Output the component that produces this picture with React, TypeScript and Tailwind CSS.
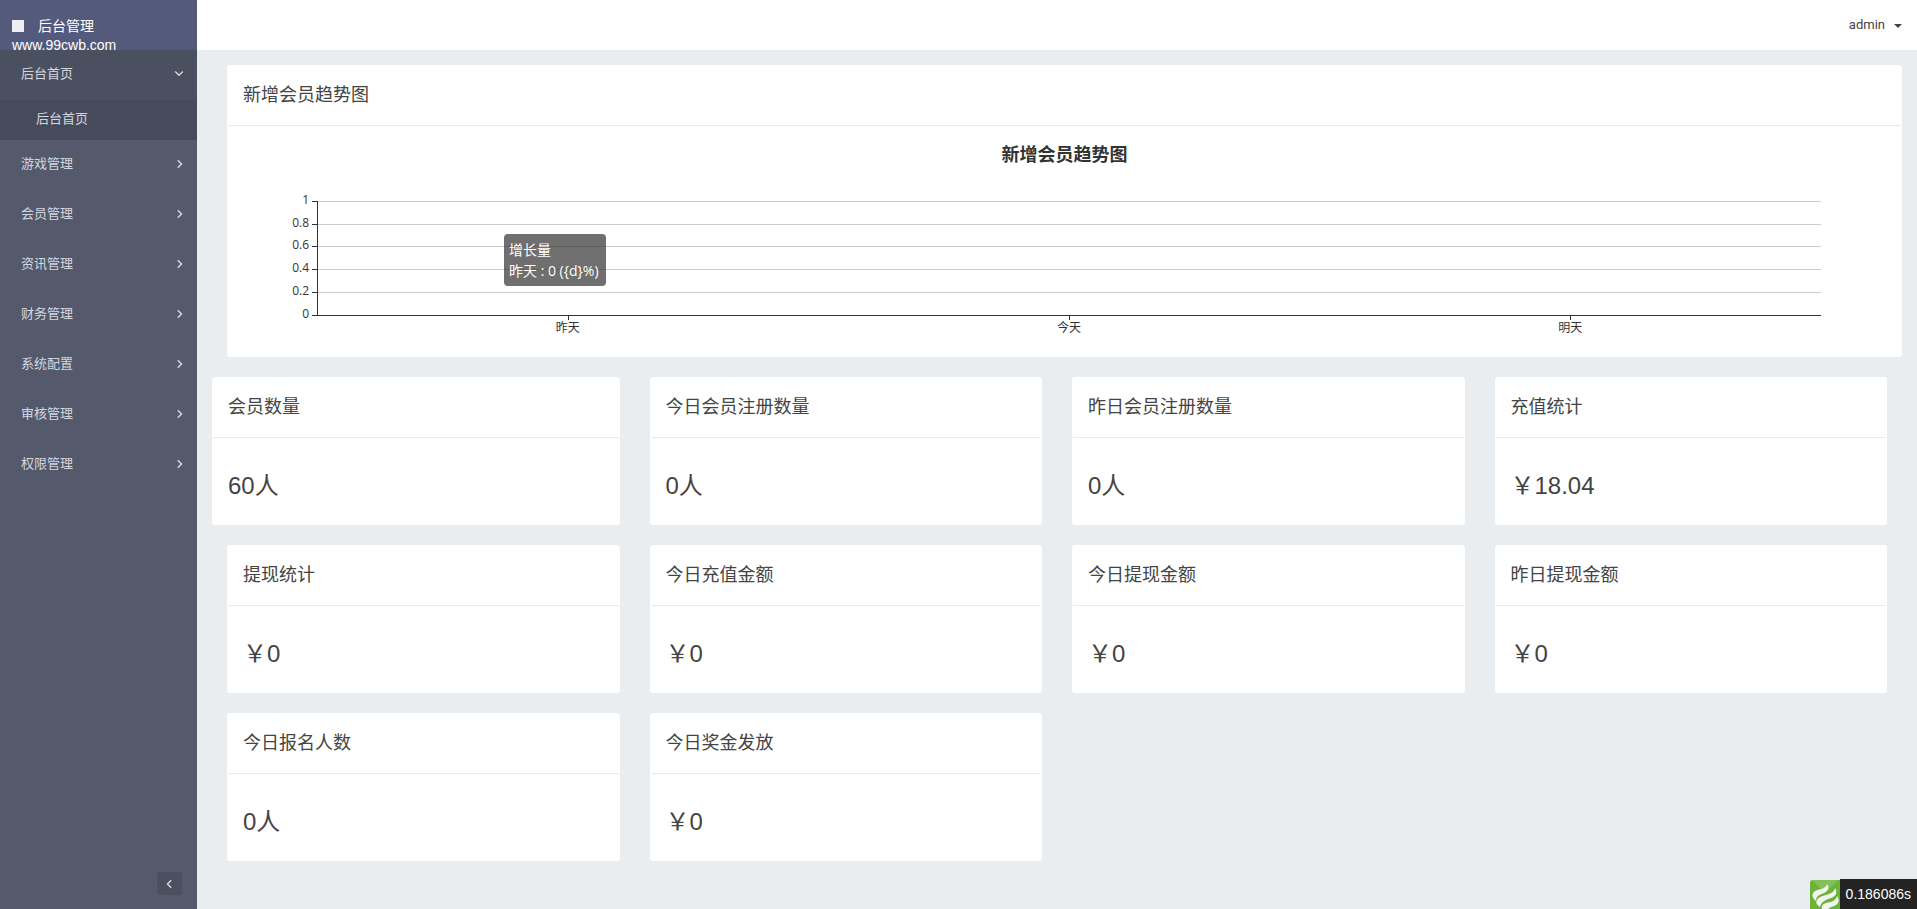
import { useState } from 'react';

interface MenuItem {
  title: string;
  children?: string[];
}

interface Stat {
  title: string;
  value: string;
}

const menus: MenuItem[] = [
  { title: '后台首页', children: ['后台首页'] },
  { title: '游戏管理' },
  { title: '会员管理' },
  { title: '资讯管理' },
  { title: '财务管理' },
  { title: '系统配置' },
  { title: '审核管理' },
  { title: '权限管理' },
];

const stats: Stat[] = [
  { title: '会员数量', value: '60人' },
  { title: '今日会员注册数量', value: '0人' },
  { title: '昨日会员注册数量', value: '0人' },
  { title: '充值统计', value: '￥18.04' },
  { title: '提现统计', value: '￥0' },
  { title: '今日充值金额', value: '￥0' },
  { title: '今日提现金额', value: '￥0' },
  { title: '昨日提现金额', value: '￥0' },
  { title: '今日报名人数', value: '0人' },
  { title: '今日奖金发放', value: '￥0' },
];

const yTicks = [
  { label: '1', y: 0 },
  { label: '0.8', y: 23 },
  { label: '0.6', y: 45 },
  { label: '0.4', y: 68 },
  { label: '0.2', y: 91 },
  { label: '0', y: 114 },
];

const xTicks = [
  { label: '昨天', x: '16.67%' },
  { label: '今天', x: '50%' },
  { label: '明天', x: '83.33%' },
];

function Angle({ dir }: { dir: 'right' | 'down' | 'left' }) {
  const points = {
    right: '3,1 6,4 3,7',
    down: '1,2 4,5 7,2',
    left: '5,1 2,4 5,7',
  };
  return (
    <svg width="10" height="10" viewBox="0 0 8 8" fill="none" stroke="currentColor" strokeWidth="1.2" aria-hidden="true">
      <polyline points={points[dir]} />
    </svg>
  );
}

function Sidebar() {
  const [open, setOpen] = useState('后台首页');

  return (
    <aside className="w-[197px] shrink-0 flex flex-col bg-[#545a6c] text-[#d3d7e0]">
      <div className="h-[50px] overflow-hidden bg-[#545a7b] pl-3 pt-4 text-sm leading-5 text-white">
        <div className="flex items-center gap-3.5 h-[19px]">
          <span className="w-3 h-3 bg-[#eeeef3]" />
          <span>后台管理</span>
        </div>
        <div>www.99cwb.com</div>
      </div>
      <nav className="text-[13px]">
        {menus.map((menu) => (
          <div key={menu.title}>
            <button
              className={`w-full h-[50px] flex items-center justify-between pl-[21px] pr-[13px] pb-0.5 ${open === menu.title ? 'bg-[#4b5060]' : ''}`}
              onClick={() => setOpen(open === menu.title ? '' : menu.title)}
            >
              <span>{menu.title}</span>
              <Angle dir={open === menu.title ? 'down' : 'right'} />
            </button>
            {open === menu.title && menu.children?.map((child) => (
              <a key={child} href="#" className="flex items-center h-10 pl-9 pb-0.5 bg-[#464b5b]">{child}</a>
            ))}
          </div>
        ))}
      </nav>
      <button aria-label="收起菜单" className="mt-auto mb-3.5 mr-[15px] self-end flex items-center justify-center w-[25px] h-[23px] rounded-[3px] bg-[#4b5060]">
        <Angle dir="left" />
      </button>
    </aside>
  );
}

function Panel({ title, children }: { title: string; children: React.ReactNode }) {
  return (
    <section className="bg-white rounded-[3px] px-px">
      <h2 className="h-[61px] flex items-center px-[15px] text-lg border-b border-[#e8e9f0]">{title}</h2>
      {children}
    </section>
  );
}

function TrendChart() {
  return (
    <div className="relative mx-3.5 pt-[15px] pb-4 text-[#333] font-['Open_Sans','Noto_Sans_CJK_SC',sans-serif]">
      <h3 className="h-[60px] text-center text-lg leading-[26px] font-bold">新增会员趋势图</h3>
      <div className="flex h-[140px] pl-[3%] pr-[4%]">
        <svg className="flex-1 min-w-0 ml-[26px] h-full overflow-visible" fontSize="12" fill="#333">
          <g shapeRendering="crispEdges">
            {yTicks.map((tick) => (
              <g key={tick.label}>
                <rect x="0" y={tick.y} width="100%" height="1" fill={tick.y === 114 ? '#333' : '#ccc'} />
                <rect x="-5" y={tick.y} width="5" height="1" />
              </g>
            ))}
            <rect x="0" y="0" width="1" height="115" />
            {xTicks.map((tick) => (
              <rect key={tick.label} x={tick.x} y="114" width="1" height="5" />
            ))}
          </g>
          {yTicks.map((tick) => (
            <text key={tick.label} x="-8" y={tick.y + 3} textAnchor="end">{tick.label}</text>
          ))}
          {xTicks.map((tick) => (
            <text key={tick.label} x={tick.x} y="131" textAnchor="middle">{tick.label}</text>
          ))}
        </svg>
      </div>
      <div className="absolute left-[262px] top-[108px] py-[5px] pl-[5px] pr-[7px] rounded bg-[rgba(50,50,50,0.7)] text-sm leading-[21px] text-white whitespace-nowrap">
        <div>增长量</div>
        <div>昨天 : 0 ({'{d}'}%)</div>
      </div>
    </div>
  );
}

export default function App() {
  return (
    <div className="min-h-screen flex bg-[#e9edf0] text-[#444] font-['Liberation_Sans','Noto_Sans_CJK_SC',sans-serif]">
      <Sidebar />
      <div className="flex-1 min-w-0">
        <header className="h-[50px] flex items-center justify-end pr-[15px] bg-white">
          <button className="flex items-center gap-[9px] text-[13px] font-['Roboto','Liberation_Sans',sans-serif]">
            <span>admin</span>
            <svg width="8" height="4" viewBox="0 0 8 4" fill="currentColor" className="mt-0.5" aria-hidden="true">
              <path d="M0 0h8L4 4z" />
            </svg>
          </button>
        </header>
        <main className="p-[15px]">
          <div className="pl-[15px] mb-5">
            <Panel title="新增会员趋势图">
              <TrendChart />
            </Panel>
          </div>
          <div className="grid grid-cols-4 gap-y-5">
            {stats.map((stat) => (
              <div key={stat.title} className="px-[15px] first:pl-0">
                <Panel title={stat.title}>
                  <p className="px-[15px] pt-[35px] pb-[26px] text-2xl leading-[26px]">{stat.value}</p>
                </Panel>
              </div>
            ))}
          </div>
        </main>
      </div>

      {/* page trace */}
      <div className="fixed right-0 bottom-0 flex items-end text-sm text-white">
        <svg width="30" height="29" viewBox="0 0 30 29" aria-hidden="true">
          <path d="M3 0h27v29H0V3a3 3 0 0 1 3-3z" fill="#6cb336" />
          <path d="M2 0h26L15 13z" fill="#84c05a" />
          <g fill="#f1f4ef">
            <path d="M17 4c3 4 1 7-3 9-5 2-8 3-8 8-4-3-5-7-1-10 4-2 11-2 12-7z" />
            <path d="M25 8c3 5 1 8-4 10-6 2-10 4-11 9-5-3-5-7 0-10 5-2 14-3 15-9z" />
            <path d="M27 16c3 4 2 8-3 10-3 1-5 2-6 3h-6c-1-3 1-5 4-6 5-1 10-2 11-7z" />
          </g>
        </svg>
        <div className="h-[30px] px-1.5 leading-[30px] bg-[#232323]">0.186086s</div>
      </div>
    </div>
  );
}
